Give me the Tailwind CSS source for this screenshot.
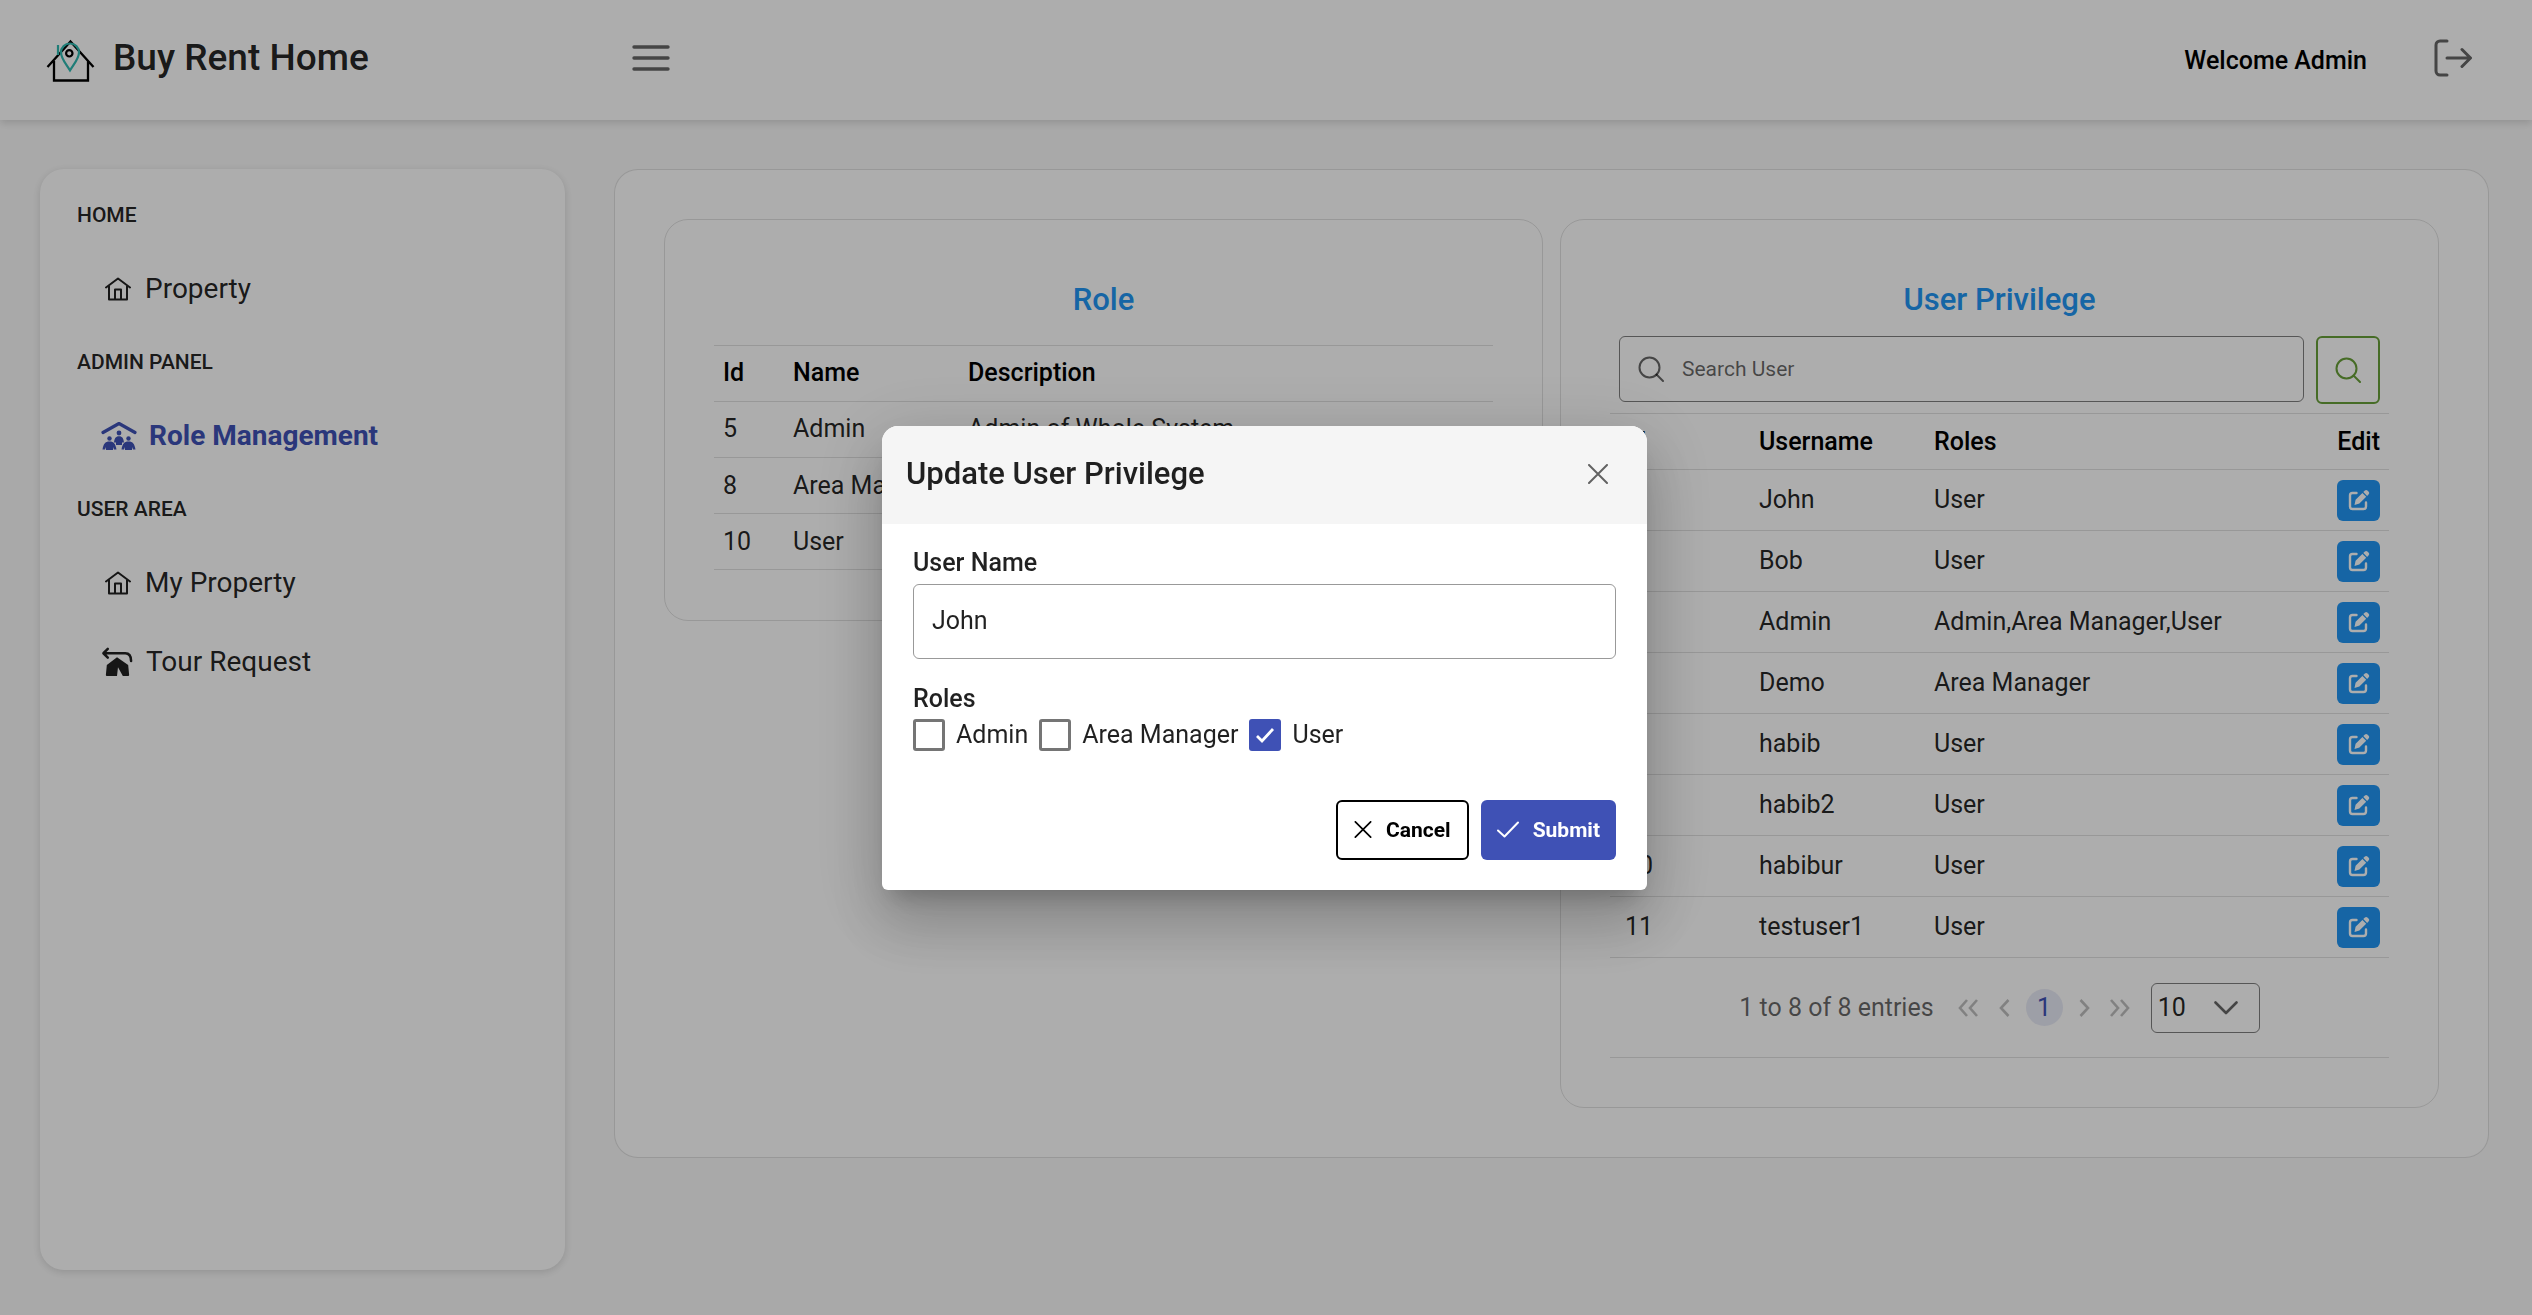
<!DOCTYPE html>
<html lang="en">
<head>
<meta charset="utf-8">
<title>Buy Rent Home</title>
<script src="https://cdn.jsdelivr.net/npm/@tailwindcss/browser@4"></script>
</head>
<body class="min-h-screen bg-[#fafafa] font-[Roboto,sans-serif] text-[25px] leading-[36px] text-black/87">

<svg class="hidden">
  <symbol id="home" viewBox="0 0 26 24"><path d="M1 10.500 13 1.500 25 10.500M4 9V22.500H22V9M10 22V12.500H16V22" fill="none" stroke="currentColor" stroke-width="2" stroke-linecap="round" stroke-linejoin="round"/></symbol>
  <symbol id="search" viewBox="0 0 26 26"><circle cx="11.500" cy="11.500" r="10" fill="none" stroke="currentColor" stroke-width="2"/><path d="M18.500 18.500 25 25" stroke="currentColor" stroke-width="2" stroke-linecap="round"/></symbol>
  <symbol id="edit" viewBox="0 0 22 22"><path d="M8.500 4H4.500A2.500 2.500 0 0 0 2 6.500V17.500A2.500 2.500 0 0 0 4.500 20H15.500A2.500 2.500 0 0 0 18 17.500V13.500" fill="none" stroke="currentColor" stroke-width="2.400" stroke-linecap="round"/><path d="M6.500 16 7.600 10.800 14.400 4 18.200 7.800 11.400 14.600Z M15.300 3.100 16.900 1.500A1.800 1.800 0 0 1 19.400 1.500L20.700 2.800A1.800 1.800 0 0 1 20.700 5.300L19.100 6.900Z" fill="currentColor"/></symbol>
  <symbol id="close" viewBox="0 0 20 20"><path d="M1 1 19 19M19 1 1 19" stroke="currentColor" stroke-width="2" stroke-linecap="round"/></symbol>
</svg>

<header class="flex h-[120px] items-center bg-white px-[46px] shadow-[0_3px_8px_rgba(0,0,0,0.14)]">
  <a href="#" class="flex w-[568px] shrink-0 items-center gap-[17px] pb-1">
    <svg class="mt-1 h-[46px] w-[50px]" viewBox="0 0 50 46" fill="none">
      <path d="M1.500 30 24.500 4.500 47.500 30M8 24V43.500H42V24" stroke="#000" stroke-width="2.300"/>
      <path d="M12 8V18M24 33.500C20 27 15 21.500 15 15.500A9 9 0 0 1 33 15.500C33 21.500 28 27 24 33.500Z" stroke="#2fb8b0" stroke-width="2.200"/>
      <circle cx="23.300" cy="16.300" r="3.200" stroke="#000" stroke-width="2.200"/>
    </svg>
    <span class="text-[37px] leading-[48px] font-medium">Buy Rent Home</span>
  </a>
  <button type="button" aria-label="Toggle menu" class="-mt-1 ml-[18px] text-black/60">
    <svg class="h-[28px] w-[38px]" viewBox="0 0 38 28"><path d="M2 3H36M2 14H36M2 25H36" stroke="currentColor" stroke-width="3.400" stroke-linecap="round"/></svg>
  </button>
  <span class="ml-auto pt-[2px] font-medium text-black">Welcome Admin</span>
  <button type="button" aria-label="Log out" class="mt-[-4px] mr-[14px] ml-[67px] text-black/60">
    <svg class="h-[38px] w-[38px]" viewBox="0 0 38 38" fill="none" stroke="currentColor" stroke-width="3" stroke-linecap="round" stroke-linejoin="round"><path d="M13 2H6A4 4 0 0 0 2 6V32A4 4 0 0 0 6 36H13M13 19H36M28 10.500 36.500 19 28 27.500"/></svg>
  </button>
</header>

<div class="flex items-start gap-[49px] pt-[49px] pr-[43px] pl-10">
  <nav class="flex min-h-[calc(100vh-214px)] w-[525px] shrink-0 flex-col rounded-[24px] bg-white px-[37px] pt-[30px] shadow-[0_2px_8px_rgba(0,0,0,0.14)]">
    <h2 class="text-[21px] leading-[32px] font-medium">HOME</h2>
    <a href="#" class="mt-[18px] flex h-[79px] items-center gap-[14px] pl-7 text-[28px]"><svg class="h-[24px] w-[26px]"><use href="#home"/></svg>Property</a>
    <h2 class="mt-[18px] text-[21px] leading-[32px] font-medium">ADMIN PANEL</h2>
    <a href="#" class="mt-[18px] flex h-[79px] items-center gap-3 pl-6 text-[28px] font-bold text-[#3f51b5]">
      <svg class="h-[30px] w-[36px]" viewBox="0 0 36 30" fill="currentColor"><path d="M2 11.500 18 2.500 34 11.500" fill="none" stroke="currentColor" stroke-width="3.200" stroke-linecap="round" stroke-linejoin="round"/><circle cx="18" cy="12" r="2.400"/><circle cx="8.500" cy="17.500" r="2.200"/><circle cx="27.500" cy="17.500" r="2.200"/><path d="M18 15.300C14.500 15.300 13.600 17.500 13 21.500H15V24H21V21.500H23C22.400 17.500 21.500 15.300 18 15.300ZM8.500 20.500C4 20.500 2.500 23 1.500 28.500H4L5 26V29H12V26L13 28.500H15.500C14.500 23 13 20.500 8.500 20.500ZM27.500 20.500C23 20.500 21.500 23 20.500 28.500H23L24 26V29H31V26L32 28.500H34.500C33.500 23 32 20.500 27.500 20.500Z"/></svg>Role Management</a>
    <h2 class="mt-[18px] text-[21px] leading-[32px] font-medium">USER AREA</h2>
    <a href="#" class="mt-[18px] flex h-[79px] items-center gap-[14px] pl-7 text-[28px]"><svg class="h-[24px] w-[26px]"><use href="#home"/></svg>My Property</a>
    <a href="#" class="flex h-[79px] items-center gap-3 pl-6 text-[28px]">
      <svg class="h-[30px] w-[33px]" viewBox="0 0 34 30"><path d="M7 1.500 2.500 6 7 10.500M3 6H25Q31 6 31 14" fill="none" stroke="currentColor" stroke-width="2.600" stroke-linecap="round" stroke-linejoin="round"/><path d="M16.500 10 28 18 29 28.500Q29 29.500 28 29.500H22.500L17.500 20.500 16.500 29.500H6Q5 29.500 5 28.500L6 18Z" fill="currentColor"/></svg>Tour Request</a>
  </nav>

  <main class="grid flex-1 grid-cols-2 items-start gap-[17px] rounded-[24px] border border-black/12 bg-white p-[49px]">
    <section class="rounded-[24px] border border-black/12 p-[49px] pb-[50px]">
      <h1 class="mt-3 text-center text-[31px] leading-[38px] font-medium text-[#2196f3]">Role</h1>
      <table class="mt-[26px] w-full table-fixed border-t border-black/12 text-left">
        <colgroup><col class="w-[70px]"><col class="w-[175px]"><col></colgroup>
        <thead><tr class="h-[56px] border-b border-black/12 text-black"><th class="px-[9px] pb-[2px] font-medium">Id</th><th class="px-[9px] pb-[2px] font-medium">Name</th><th class="px-[9px] pb-[2px] font-medium">Description</th></tr></thead>
        <tbody>
          <tr class="h-[56px] border-b border-black/12"><td class="px-[9px] pb-[2px]">5</td><td class="px-[9px] pb-[2px]">Admin</td><td class="px-[9px] pb-[2px]">Admin of Whole System</td></tr>
          <tr class="h-[56px] border-b border-black/12"><td class="px-[9px]">8</td><td class="px-[9px]">Area Manager</td><td class="px-[9px]">Area Manager</td></tr>
          <tr class="h-[56px] border-b border-black/12"><td class="px-[9px]">10</td><td class="px-[9px]">User</td><td class="px-[9px]">User</td></tr>
        </tbody>
      </table>
    </section>

    <section class="rounded-[24px] border border-black/12 p-[49px]">
      <h1 class="mt-3 text-center text-[31px] leading-[38px] font-medium text-[#2196f3]">User Privilege</h1>
      <form class="mt-[17px] flex items-start gap-3 px-[9px]">
        <label class="flex h-[66px] flex-1 items-center gap-[18px] rounded-[6px] border border-black/50 px-[18px] text-black/60">
          <svg class="h-[26px] w-[26px]"><use href="#search"/></svg>
          <input type="text" aria-label="Search User" placeholder="Search User" class="min-w-0 flex-1 text-[21px] outline-none placeholder:text-black/60">
        </label>
        <button type="button" aria-label="Search" class="flex h-[68px] w-[64px] items-center justify-center rounded-[6px] border-2 border-[#689f38] text-[#689f38]"><svg class="h-[26px] w-[26px]"><use href="#search"/></svg></button>
      </form>
      <table class="mt-[9px] w-full table-fixed border-t border-black/12 text-left">
        <colgroup><col class="w-[140px]"><col class="w-[175px]"><col><col class="w-[90px]"></colgroup>
        <thead><tr class="h-[56px] border-b border-black/12 text-black"><th class="px-[15px] font-medium">Id</th><th class="px-[9px] font-medium">Username</th><th class="px-[9px] font-medium">Roles</th><th class="px-[9px] text-right font-medium">Edit</th></tr></thead>
        <tbody id="users"></tbody>
      </table>
      <div class="flex h-[100px] items-center justify-center border-b border-black/12 text-black/60">
        <span>1 to 8 of 8 entries</span>
        <button type="button" aria-label="First page" class="ml-6 text-black/25"><svg class="h-[18px] w-[20px]" viewBox="0 0 20 18" fill="none" stroke="currentColor" stroke-width="2.600"><path d="M9 1 2 9 9 17M19 1 12 9 19 17"/></svg></button>
        <button type="button" aria-label="Previous page" class="ml-[21px] text-black/25"><svg class="h-[18px] w-[11px]" viewBox="0 0 11 18" fill="none" stroke="currentColor" stroke-width="2.600"><path d="M9.500 1 2 9 9.500 17"/></svg></button>
        <button type="button" class="mx-4 h-[37px] w-[37px] rounded-full bg-[#3f51b5]/12 text-[#3f51b5]">1</button>
        <button type="button" aria-label="Next page" class="text-black/25"><svg class="h-[18px] w-[11px]" viewBox="0 0 11 18" fill="none" stroke="currentColor" stroke-width="2.600"><path d="M1.500 1 9 9 1.500 17"/></svg></button>
        <button type="button" aria-label="Last page" class="ml-5 text-black/25"><svg class="h-[18px] w-[20px]" viewBox="0 0 20 18" fill="none" stroke="currentColor" stroke-width="2.600"><path d="M1 1 8 9 1 17M11 1 18 9 11 17"/></svg></button>
        <div class="relative ml-[21px] h-[50px] w-[109px] rounded-[6px] border border-black/50">
          <select aria-label="Rows per page" class="h-full w-full appearance-none pl-[6px] text-black/87"><option>10</option><option>25</option></select>
          <svg class="pointer-events-none absolute top-[17px] right-[21px] h-[14px] w-[24px]" viewBox="0 0 24 14" fill="none" stroke="currentColor" stroke-width="2.600" stroke-linecap="round" stroke-linejoin="round"><path d="M1.500 1.500 12 12 22.500 1.500"/></svg>
        </div>
      </div>
    </section>
  </main>
</div>

<div class="fixed inset-0 flex items-center justify-center bg-black/32">
  <div role="dialog" aria-modal="true" aria-labelledby="dialog-title" class="mr-[3px] w-[765px] overflow-hidden rounded-t-[16px] rounded-b-[6px] bg-white shadow-[0_16px_22px_-10px_rgba(0,0,0,0.2),0_36px_57px_4px_rgba(0,0,0,0.14),0_14px_69px_12px_rgba(0,0,0,0.12)]">
    <div class="flex h-[98px] items-center justify-between bg-[#f5f5f5] pr-[39px] pb-[2px] pl-6">
      <h2 id="dialog-title" class="text-[31px] font-medium">Update User Privilege</h2>
      <button type="button" aria-label="Close" class="text-black/60"><svg class="h-[20px] w-[20px]"><use href="#close"/></svg></button>
    </div>
    <form class="px-[31px] pt-[21px] pb-[30px]">
      <label for="username" class="block h-[39px] font-medium">User Name</label>
      <input id="username" type="text" value="John" class="block h-[75px] w-full rounded-[6px] border border-black/40 px-[18px] pb-[2px]">
      <fieldset class="mt-[22px]">
        <legend class="h-9 font-medium">Roles</legend>
        <div class="flex items-center gap-[11px]">
          <label class="flex items-center gap-[11px]"><input type="checkbox" class="h-8 w-8 appearance-none rounded-[3px] border-3 border-[#757575]">Admin</label>
          <label class="flex items-center gap-[11px]"><input type="checkbox" class="h-8 w-8 appearance-none rounded-[3px] border-3 border-[#757575]">Area Manager</label>
          <label class="relative flex items-center gap-[11px]"><input type="checkbox" checked class="h-8 w-8 appearance-none rounded-[3px] bg-[#3f51b5]"><svg class="pointer-events-none absolute top-[9px] left-[6px] h-[18px] w-[20px] text-white" viewBox="0 0 20 18"><path d="M2 10 7 15 18 3" fill="none" stroke="currentColor" stroke-width="2.800"/></svg>User</label>
        </div>
      </fieldset>
      <div class="mt-[47px] flex justify-end gap-3 text-[21px] font-bold">
        <button type="button" class="flex h-[60px] items-center gap-[14px] rounded-[6px] border-2 border-black px-4 text-black"><svg class="h-[17px] w-[18px]"><use href="#close"/></svg>Cancel</button>
        <button type="submit" class="flex h-[60px] items-center gap-[14px] rounded-[6px] bg-[#3f51b5] px-4 text-white"><svg class="h-[17px] w-[22px]" viewBox="0 0 22 17"><path d="M1 9.500 7.500 15.500 21 1.500" fill="none" stroke="currentColor" stroke-width="2" stroke-linecap="round" stroke-linejoin="round"/></svg>Submit</button>
      </div>
    </form>
  </div>
</div>

<script>
const users = [[3,'John','User'],[4,'Bob','User'],[5,'Admin','Admin,Area Manager,User'],[7,'Demo','Area Manager'],[8,'habib','User'],[9,'habib2','User'],[10,'habibur','User'],[11,'testuser1','User']];
document.getElementById('users').innerHTML = users.map(([id, name, roles]) => `
  <tr class="h-[61px] border-b border-black/12">
    <td class="px-[15px]">${id}</td><td class="px-[9px]">${name}</td><td class="px-[9px]">${roles}</td>
    <td class="px-[9px]"><button type="button" aria-label="Edit ${name}" class="ml-auto flex h-[41px] w-[43px] items-center justify-center rounded-[6px] bg-[#2196f3] text-white"><svg class="h-[22px] w-[22px]"><use href="#edit"/></svg></button></td>
  </tr>`).join('');
</script>
</body>
</html>
